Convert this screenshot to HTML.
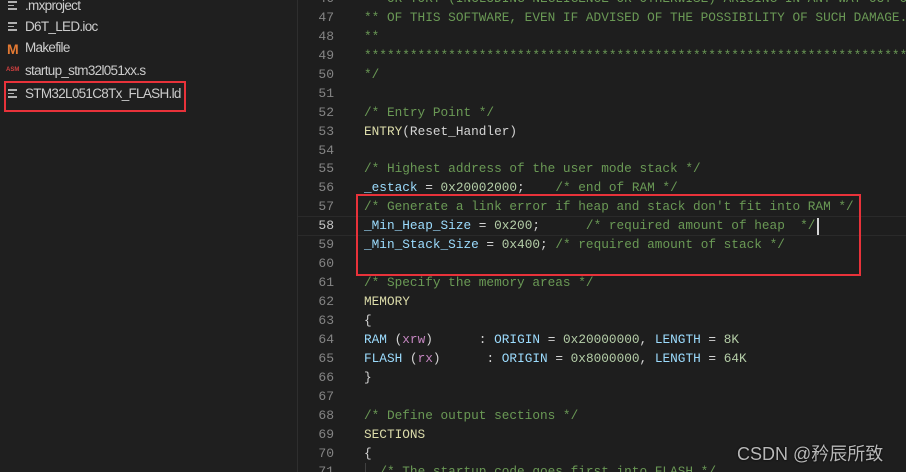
<!DOCTYPE html>
<html style="overflow:hidden;width:906px;height:472px"><head><meta charset="utf-8"><style>
body{margin:0;width:906px;height:472px;overflow:hidden;background:#1e1e1e;position:relative;font-family:"Liberation Sans",sans-serif}
#side{position:absolute;left:0;top:0;width:297px;height:472px;background:#1f1f1f;border-right:1px solid #2e2e2e}
.it{position:absolute;left:25px;color:#cccccc;font-size:13.5px;line-height:20px;letter-spacing:-0.7px}
.ic{position:absolute;left:8px;width:9px}
.ic i{display:block;height:1.5px;background:#b0b0b0;margin-bottom:2px}
.ln{position:absolute;left:300px;width:34px;text-align:right;color:#858585;font:13px "Liberation Mono",monospace;line-height:18.93px}
.cd{position:absolute;left:364px;white-space:pre;color:#d4d4d4;font:12.75px "Liberation Mono",monospace;line-height:18.93px}
.c{color:#6a9955}.y{color:#dcdcaa}.b{color:#9cdcfe}.n{color:#b5cea8}.p{color:#c586c0}
</style></head><body>
<div id="side">
<div class="ic" style="top:1px"><i></i><i style="width:6px"></i><i></i></div><div class="it" style="top:-4px">.mxproject</div>
<div class="ic" style="top:22px"><i></i><i style="width:6px"></i><i></i></div><div class="it" style="top:17px">D6T_LED.ioc</div>
<div style="position:absolute;left:7px;top:41px;color:#e37933;font-weight:bold;font-size:14px">M</div><div class="it" style="top:38px">Makefile</div>
<div style="position:absolute;left:6px;top:67px;color:#d04040;font-size:6px;font-weight:bold">ASM</div><div class="it" style="top:61px">startup_stm32l051xx.s</div>
<div class="ic" style="top:89px"><i></i><i style="width:6px"></i><i></i></div><div class="it" style="top:84px">STM32L051C8Tx_FLASH.ld</div>
<div style="position:absolute;left:4px;top:81px;width:178px;height:27px;border:2px solid #e8323a"></div>
</div>
<div style="position:absolute;left:298px;top:216px;width:608px;height:18px;border-top:1px solid #2a2a2a;border-bottom:1px solid #2a2a2a"></div>
<div style="position:absolute;left:365px;top:463px;width:1px;height:9px;background:#404040"></div>
<div class="ln" style="top:-10px">46<br>47<br>48<br>49<br>50<br>51<br>52<br>53<br>54<br>55<br>56<br>57<br><span style="color:#c6c6c6">58</span><br>59<br>60<br>61<br>62<br>63<br>64<br>65<br>66<br>67<br>68<br>69<br>70<br>71</div>
<div class="cd" style="top:-10px"><span class="c">   OR TORT (INCLUDING NEGLIGENCE OR OTHERWISE) ARISING IN ANY WAY OUT OF
** OF THIS SOFTWARE, EVEN IF ADVISED OF THE POSSIBILITY OF SUCH DAMAGE.
**
*************************************************************************
*/</span>

<span class="c">/* Entry Point */</span>
<span class="y">ENTRY</span>(Reset_Handler)

<span class="c">/* Highest address of the user mode stack */</span>
<span class="b">_estack</span> = <span class="n">0x20002000</span>;    <span class="c">/* end of RAM */</span>
<span class="c">/* Generate a link error if heap and stack don't fit into RAM */</span>
<span class="b">_Min_Heap_Size</span> = <span class="n">0x200</span>;      <span class="c">/* required amount of heap  */</span>
<span class="b">_Min_Stack_Size</span> = <span class="n">0x400</span>; <span class="c">/* required amount of stack */</span>

<span class="c">/* Specify the memory areas */</span>
<span class="y">MEMORY</span>
{
<span class="b">RAM</span> (<span class="p">xrw</span>)      : <span class="b">ORIGIN</span> = <span class="n">0x20000000</span>, <span class="b">LENGTH</span> = <span class="n">8K</span>
<span class="b">FLASH</span> (<span class="p">rx</span>)      : <span class="b">ORIGIN</span> = <span class="n">0x8000000</span>, <span class="b">LENGTH</span> = <span class="n">64K</span>
}

<span class="c">/* Define output sections */</span>
<span class="y">SECTIONS</span>
{
  <span class="c">/* The startup code goes first into FLASH */</span></div>
<div style="position:absolute;left:817px;top:218px;width:1.5px;height:17px;background:#d4d4d4"></div>
<div style="position:absolute;left:356px;top:194px;width:501px;height:78px;border:2px solid #e8323a"></div>
<div style="position:absolute;left:737px;top:440px;color:#b8b8b8;font:18px 'Liberation Sans','Noto Sans CJK SC',sans-serif;text-shadow:0 0 2px #000">CSDN @矜辰所致</div>
</body></html>
